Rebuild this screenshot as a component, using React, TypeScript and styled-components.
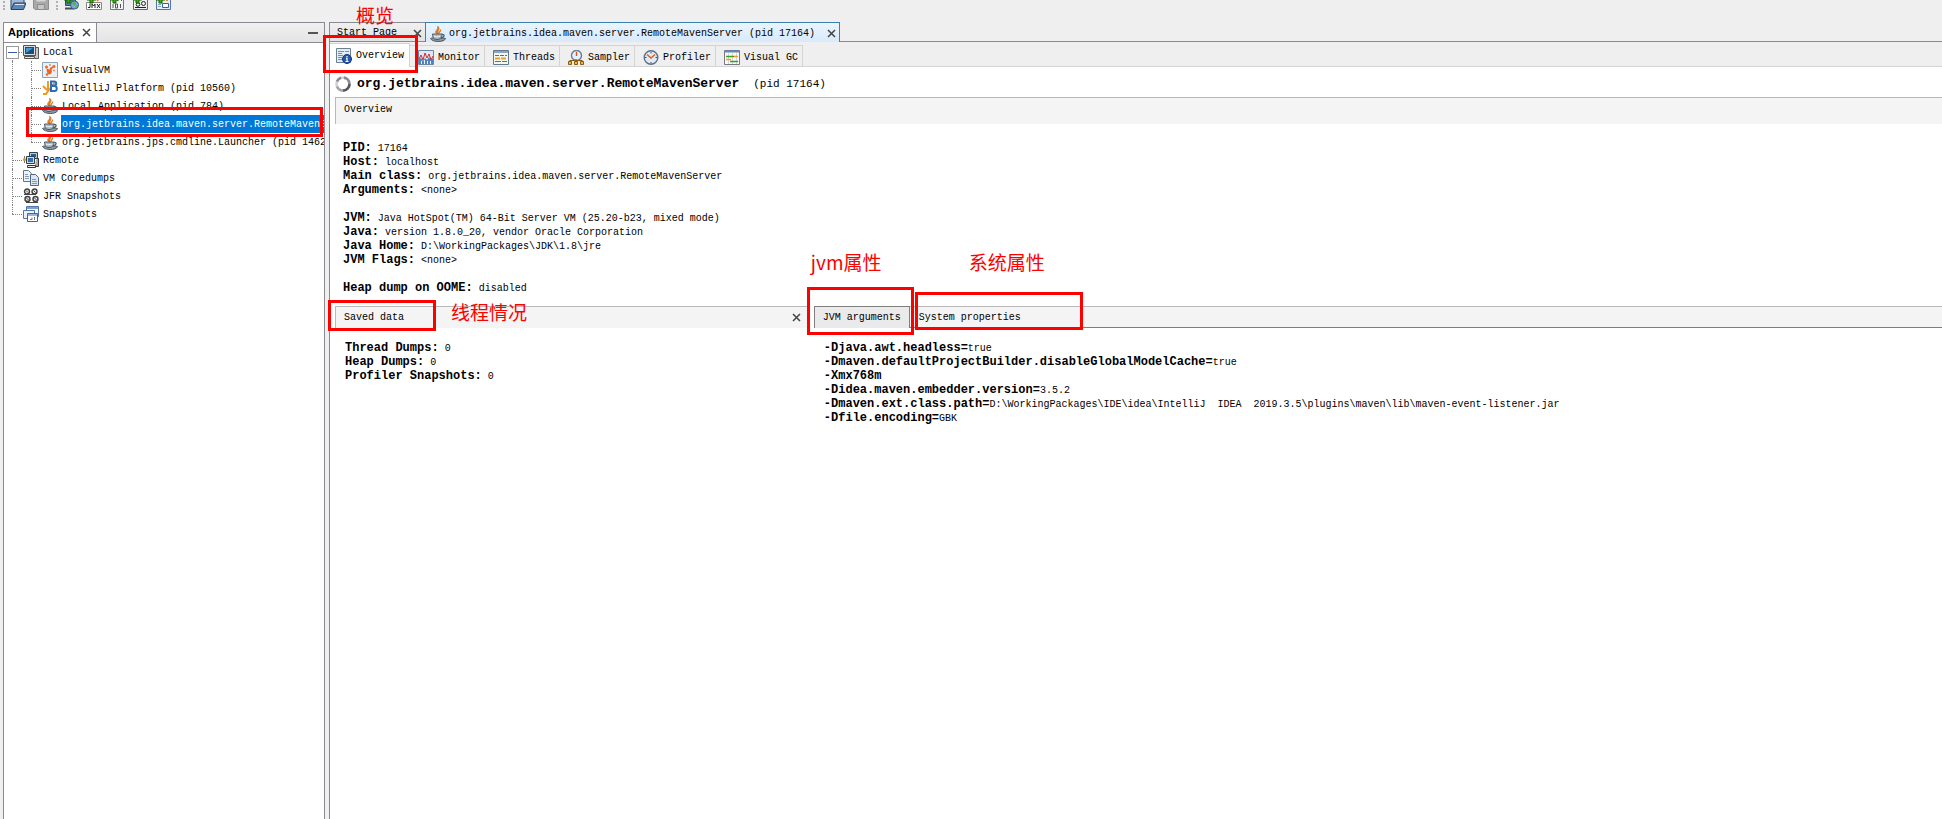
import React from "react";
import styled, { createGlobalStyle, css } from "styled-components";

const MONO = '"Liberation Mono", "Noto Sans CJK SC", monospace';

const GlobalStyle = createGlobalStyle`
  *, *::before, *::after { box-sizing: border-box; }
  body { margin: 0; background: #efefef; color: #000; font: 10px/14px ${MONO}; }
  button { margin: 0; padding: 0; border: 0; background: none; color: inherit; font: inherit; white-space: pre; cursor: default; }
  ul { margin: 0; padding: 0; list-style: none; }
  svg { display: block; flex: none; }
`;

/* ---------- icons ---------- */

const Icon = ({ children }: { children: React.ReactNode }) => (
  <svg width="16" height="16" viewBox="0 0 16 16" fill="none" aria-hidden="true">
    {children}
  </svg>
);

const Plus = () => <path d="M1 3h3V0h3v3h3v3H7v3H4V6H1z" fill="#3fae12" stroke="#176300" />;

const OpenIcon = () => (
  <Icon>
    <path d="M1 15V3h5l1 2h7v4" fill="#9db8d8" stroke="#33475f" />
    <path d="M1 15.500L4 9h12l-2.500 6.500z" fill="#5c86b8" stroke="#2c405a" />
    <path d="M5 10.500h9" stroke="#d7e5f5" />
  </Icon>
);
const SaveIcon = () => (
  <Icon>
    <path d="M.5 1.500h15v14H2l-1.500-1.500z" fill="#a9a9a9" stroke="#8d8d8d" />
    <path d="M3.500 1.500h9v6h-9z" fill="#d6d6d6" />
    <path d="M4.500 10.500h7v5h-7z" fill="#c6c6c6" stroke="#8d8d8d" />
  </Icon>
);
const HostIcon = () => (
  <Icon>
    <path d="M2.500 2.500h10v9h-10z" fill="#4d84b4" stroke="#3a4653" />
    <path d="M2 14.500h9" stroke="#4a4a4a" strokeWidth="2" />
    <circle cx="11.500" cy="11" r="4" fill="#79abdc" stroke="#35607f" />
    <path d="M9 9l3-1 1 2-2 2zM12 13l2-2 1 1-2 2z" fill="#5eaf3e" />
    <Plus />
  </Icon>
);
const JmxIcon = () => (
  <Icon>
    <path d="M12 1c2 2-2 3 0 6" stroke="#e88124" strokeWidth="2" />
    <path d="M.5 8.500h15v7H.5z" fill="#fff" stroke="#888" />
    <path d="M2 13.500h2v-4M6 14v-4l1.500 2L9 10v4M11 10l3 4M14 10l-3 4" stroke="#222" />
    <Plus />
  </Icon>
);
const CoreIcon = () => (
  <Icon>
    <path d="M1.500 1.500h13v14h-13z" fill="#f4f4f4" stroke="#777" />
    <path d="M8.500 3v4M12.500 3v4M4 10v4M6.500 10h2v4h-2zM11.500 10v4" stroke="#555" />
    <Plus />
  </Icon>
);
const JfrAddIcon = () => (
  <Icon>
    <path d="M1.500 4.500h14v11h-14z" fill="#f1f1f1" stroke="#666" />
    <circle cx="6" cy="10.500" r="1.800" stroke="#222" />
    <circle cx="11.500" cy="9.500" r="2" stroke="#222" />
    <path d="M3 13.500h11" stroke="#222" />
    <Plus />
  </Icon>
);
const SnapAddIcon = () => (
  <Icon>
    <path d="M1.500 1.500h14v14h-14z" fill="#e4edf9" stroke="#5376a6" />
    <path d="M7.500 9.500h6v4h-6z" fill="#fff" stroke="#3464a5" />
    <path d="M3 10.500h3M3 12.500h3" stroke="#8aa" />
    <path d="M11 4h2v3h-2z" fill="#e88124" />
    <Plus />
  </Icon>
);

const LocalIcon = () => (
  <Icon>
    <path d="M12.500 3.500h3v11h-4" fill="#c9c9c9" stroke="#5a5a5a" />
    <path d="M.5 1.500h12v10H.5z" fill="#d8dde2" stroke="#4a5560" />
    <path d="M2 3h9v7H2z" fill="#154f80" />
    <path d="M3 9V4h7z" fill="#4a98cc" />
    <path d="M1.500 12.500h10v2h-10z" fill="#e3e3e3" stroke="#555" />
  </Icon>
);
const VisualVmIcon = () => (
  <Icon>
    <path d="M.5 .5h15v15H.5z" fill="#e9f1f8" stroke="#8aa4bd" />
    <path d="M4.500 6.500c0 3 1 6 3 6s3-3 2-6l-2 1z" fill="#f2651d" />
    <path d="M8 7l3-2" stroke="#f2651d" strokeWidth="2" />
    <circle cx="4.500" cy="5" r="1.500" fill="#f2651d" />
    <circle cx="8" cy="3" r="1" fill="#f58a50" />
    <circle cx="12" cy="4.500" r="1.400" fill="#f2651d" />
    <circle cx="12" cy="8.500" r="1" fill="#f58a50" />
    <circle cx="5" cy="12.500" r="1.300" fill="#f2651d" />
  </Icon>
);
const IdeaIcon = () => (
  <Icon>
    <path d="M6 1v10l-2 3H1M1 6l4 4M4 14l9-12" stroke="#f09a1a" strokeWidth="2" />
    <path d="M9 1.500h3c3 0 3 4 0 4h-3zM9 6h3.500c3 0 3 5 0 5H9z" stroke="#2b6cc0" strokeWidth="2" />
  </Icon>
);
const JavaIcon = () => (
  <Icon>
    <path d="M7 8C3 5 9 4 7.500 0c4 3-1 4.500 1 8z" fill="#e8801c" stroke="#c8621a" strokeWidth=".6" />
    <path d="M9 7.500c0-2 2-2 1.500-4" stroke="#e27a1e" strokeWidth="1.400" />
    <path d="M.5 12.500c2-1 12-1 15 0-1 4-13 4-15 0z" fill="#8e9ba6" stroke="#4b5761" />
    <path d="M2.500 8h9.500c0 4-2 5.500-5 5.500S2.500 12 2.500 8z" fill="#aab6c0" stroke="#4f5c67" />
    <path d="M12 8.500c3-.5 3 2.500-1 3.500" stroke="#4f5c67" strokeWidth="1.300" />
    <path d="M4 10c1.500 1 4 1 6 0" stroke="#f4f7f9" />
  </Icon>
);
const RemoteIcon = () => (
  <Icon>
    <path d="M6.500 .5h8v6h-8z" fill="#bccad6" stroke="#333f4a" />
    <path d="M8 2h5v3H8z" fill="#245f96" />
    <path d="M13.500 6.500h2v8h-4" fill="#aaa" stroke="#333" />
    <path d="M3.500 4.500h8v7h-8z" fill="#cfd8df" stroke="#333f4a" />
    <path d="M5 6h5v4H5z" fill="#2d74ae" />
    <path d="M4.500 13.500h8v2h-8z" fill="#eee" stroke="#333" />
    <path d="M1.500 4v7" stroke="#777" />
    <circle cx="1.500" cy="7.500" r="1.500" fill="#d99024" />
  </Icon>
);
const DumpsIcon = () => (
  <Icon>
    <path d="M.5 .5h5l3 3v8h-8z" fill="#eef3f8" stroke="#60758a" />
    <path d="M7.500 4.500h5l3 3v8h-8z" fill="#dbe6f1" stroke="#4c6886" />
    <path d="M2 4.500h3M2 6.500h4M2 8.500h4M9 9.500h4M9 11.500h5M9 13.500h5" stroke="#8299b1" />
  </Icon>
);
const JfrIcon = () => (
  <Icon>
    <g stroke="#3f3f3f" strokeWidth="1.400" fill="#eee">
      <circle cx="4" cy="3.500" r="2.500" />
      <circle cx="11.500" cy="3.500" r="2.500" />
      <circle cx="4.500" cy="11" r="2.500" />
      <circle cx="12.500" cy="11" r="2.500" />
    </g>
    <path d="M1 6.500h12M3 14.500h12M3 2.500l2 2M10.500 2.500l2 2M3.500 10l2 2M11.500 10l2 2" stroke="#444" />
  </Icon>
);
const SnapshotsIcon = () => (
  <Icon>
    <path d="M3.500 .5h12v10h-12z" fill="#f5f9ff" stroke="#5275a8" />
    <path d="M4 2h11" stroke="#7fa0cf" strokeWidth="2" />
    <path d="M.5 4.500h11v8H.5z" fill="#eaf1fb" stroke="#5275a8" />
    <path d="M4.500 7.500h10v8h-10z" fill="#fff" stroke="#43669a" />
    <path d="M5 9h9" stroke="#9db5d8" strokeWidth="2" />
    <path d="M7 13.500h2v-2M11.500 14v-3" stroke="#777" />
  </Icon>
);

const OverviewIcon = () => (
  <Icon>
    <path d="M.5 .5h14v14H.5z" fill="#e3ebf4" stroke="#6b7f93" />
    <path d="M2 3.500h6M2 5.500h4M2 7.500h5M2 9.500h4M2 11.500h4" stroke="#7b8fa3" />
    <path d="M9 3.500h4" stroke="#7b8fa3" />
    <circle cx="11" cy="11" r="4.500" fill="#2457a7" stroke="#14377a" />
    <path d="M11 8v1.500M10 10.500h1V13M9.500 13.500h3" stroke="#fff" strokeWidth="1.200" />
  </Icon>
);
const MonitorIcon = () => (
  <Icon>
    <path d="M.5 .5h15v14H.5z" fill="#dce8f4" stroke="#6b86a3" />
    <path d="M1 14V9l2-1 2 3 2-3 2 2 2-3 2 3 2-2v6z" fill="#4d84c4" />
    <path d="M1 9l2-4 2 5 2-7 2 5 2-4 2 6 2-4" stroke="#d8282b" />
    <path d="M3.500 14v-3M6.500 14v-4M9.500 14v-3M12.500 14v-3" stroke="#e8f0f8" />
  </Icon>
);
const ThreadsIcon = () => (
  <Icon>
    <path d="M.5 .5h15v14H.5z" fill="#f3f7ee" stroke="#62788f" />
    <path d="M1 2h14" stroke="#8ba4bf" strokeWidth="2" />
    <path d="M2 5.500h12" stroke="#2f9235" strokeDasharray="4 1" />
    <path d="M2 8.500h12" stroke="#e6a52a" strokeWidth="2" strokeDasharray="5 1" />
    <path d="M2 11.500h12" stroke="#2f9235" strokeDasharray="6 1" />
  </Icon>
);
const SamplerIcon = () => (
  <Icon>
    <circle cx="8.500" cy="5.500" r="5" fill="#e8f1fa" stroke="#627e9b" strokeWidth="1.400" />
    <path d="M8.500 2v4" stroke="#d3541f" strokeWidth="1.400" />
    <path d="M1.500 10.500h13M8 9v3" stroke="#8a5a12" />
    <path d="M.5 11.500h3v3h-3zM6.500 11.500h3v3h-3zM12.500 11.500h3v3h-3z" fill="#f3b643" stroke="#8a5a12" />
  </Icon>
);
const ProfilerIcon = () => (
  <Icon>
    <circle cx="8" cy="7.500" r="6.800" fill="#dfeaf5" stroke="#5b7085" strokeWidth="1.400" />
    <path d="M8 2v1.500M8 12v1.500M2 7.500h1.500M12.500 7.500H14" stroke="#456" />
    <path d="M4 4.500L8 8l4-3.500" stroke="#e2601c" strokeWidth="1.600" />
  </Icon>
);
const GcIcon = () => (
  <Icon>
    <path d="M.5 .5h15v14H.5z" fill="#fbfbf6" stroke="#778" />
    <path d="M1 1.500h14" stroke="#6488b4" strokeWidth="2" />
    <path d="M4.500 3v11M8.500 3v11M12.500 3v11" stroke="#d6d6d6" />
    <path d="M2 6.500h8M6 11.500h8" stroke="#35a02e" strokeWidth="1.400" />
    <path d="M10 6.500h4M2 9.500h5" stroke="#ef9d25" strokeWidth="1.400" />
  </Icon>
);
const SpinnerIcon = () => (
  <Icon>
    <circle cx="8" cy="8" r="6.500" stroke="#d2d2d6" strokeWidth="2.600" />
    <path d="M6 1.800A6.500 6.500 0 0 0 2 5.500" stroke="#8a8a92" strokeWidth="2.600" />
    <path d="M2 10.500A6.500 6.500 0 0 0 8 14.500" stroke="#a4a4ab" strokeWidth="2.600" />
    <path d="M8 14.500A6.500 6.500 0 0 0 14.500 8" stroke="#55555e" strokeWidth="2.600" />
    <path d="M9 1.600A6.500 6.500 0 0 1 14.500 8" stroke="#8a8a92" strokeWidth="2.600" />
  </Icon>
);
const CrossIcon = () => (
  <svg width="9" height="9" viewBox="0 0 9 9" aria-hidden="true">
    <path d="M1 1l7 7M8 1L1 8" stroke="#444" strokeWidth="1.500" />
  </svg>
);

/* ---------- frame ---------- */

const Window = styled.div`
  display: flex;
  flex-direction: column;
  min-height: 100vh;
  overflow: hidden;
`;
const Toolbar = styled.div`
  display: flex;
  align-items: flex-end;
  gap: 7px;
  height: 22px;
  padding: 0 0 12px 3px;
`;
const Grip = styled.span`
  width: 2px;
  height: 16px;
  margin-right: -2px;
  border-left: 2px dotted #b0b0b0;
`;
const Panels = styled.div`
  display: grid;
  grid-template-columns: 322px minmax(0, 1fr);
  gap: 4px;
  flex: 1;
  padding-left: 3px;
`;

/* ---------- red marks over the window ---------- */

type Box = { $x: number; $y: number; $w?: number; $h?: number };
const Mark = styled.span<Box>`
  position: absolute;
  z-index: 10;
  left: ${(p) => p.$x}px;
  top: ${(p) => p.$y}px;
  width: ${(p) => p.$w}px;
  height: ${(p) => p.$h}px;
  border: 3px solid #fe0000;
  pointer-events: none;
`;
const Note = styled.span<Box>`
  position: absolute;
  z-index: 10;
  left: ${(p) => p.$x}px;
  top: ${(p) => p.$y}px;
  color: #fe0000;
  font: 19px/28px "Noto Sans CJK SC", sans-serif;
  white-space: nowrap;
  pointer-events: none;
`;

/* ---------- applications panel ---------- */

const Sidebar = styled.aside`
  min-width: 0;
  border: solid #8a8a92;
  border-width: 1px 1px 0;
  background: #fff;
`;
const SidebarHead = styled.header`
  display: flex;
  align-items: center;
  height: 20px;
  border-bottom: 1px solid #8a8a92;
  background: linear-gradient(#f0f0f0, #e4e4e4);
`;
const SidebarTab = styled.div`
  display: flex;
  align-items: center;
  gap: 8px;
  height: 19px;
  padding: 0 5px 0 4px;
  border-right: 1px solid #8a8a92;
  background: #fff;
  font: bold 11px/19px "Liberation Sans", Arial, sans-serif;
`;
const Minimize = styled.button`
  width: 10px;
  height: 2px;
  margin: 0 6px 0 auto;
  background: #555;
`;

const TreeRow = styled.li`
  position: relative;
  display: flex;
  align-items: center;
  height: 18px;
`;
type GuideKind = "line" | "tee" | "corner" | "box";
const Guide = styled.span<{ $kind: GuideKind }>`
  position: relative;
  flex: none;
  width: 19px;
  height: 18px;
  &::before {
    content: "";
    position: absolute;
    left: 8px;
    top: ${(p) => (p.$kind === "box" ? 9 : 0)}px;
    height: ${(p) => (p.$kind === "corner" || p.$kind === "box" ? 9 : 18)}px;
    border-left: 1px dotted #808080;
  }
  &::after {
    content: "";
    position: absolute;
    left: 8px;
    top: 9px;
    width: 10px;
    border-top: 1px dotted #808080;
    ${(p) => p.$kind === "line" && css`display: none;`}
  }
`;
const Expander = styled.button`
  position: absolute;
  z-index: 1;
  left: 2px;
  top: 3px;
  width: 13px;
  height: 13px;
  border: 1px solid #999;
  background: linear-gradient(#3d5aa8, #3d5aa8) center / 9px 1px no-repeat, #fff;
`;
const NodeLabel = styled.button<{ $selected?: boolean }>`
  flex: 1;
  min-width: 0;
  height: 18px;
  margin-left: 3px;
  padding: 2px 0 0 1px;
  overflow: hidden;
  text-align: left;
  background: ${(p) => (p.$selected ? "#0078d7" : "none")};
  color: ${(p) => (p.$selected ? "#fff" : "#000")};
`;

type Node = { label: string; icon: React.ReactNode; guides: GuideKind[]; selected?: boolean };
const NODES: Node[] = [
  { label: "Local", icon: <LocalIcon />, guides: ["box"] },
  { label: "VisualVM", icon: <VisualVmIcon />, guides: ["line", "tee"] },
  { label: "IntelliJ Platform (pid 10560)", icon: <IdeaIcon />, guides: ["line", "tee"] },
  { label: "Local Application (pid 784)", icon: <JavaIcon />, guides: ["line", "tee"] },
  { label: "org.jetbrains.idea.maven.server.RemoteMavenServer", icon: <JavaIcon />, guides: ["line", "tee"], selected: true },
  { label: "org.jetbrains.jps.cmdline.Launcher (pid 1462", icon: <JavaIcon />, guides: ["line", "corner"] },
  { label: "Remote", icon: <RemoteIcon />, guides: ["tee"] },
  { label: "VM Coredumps", icon: <DumpsIcon />, guides: ["tee"] },
  { label: "JFR Snapshots", icon: <JfrIcon />, guides: ["tee"] },
  { label: "Snapshots", icon: <SnapshotsIcon />, guides: ["corner"] },
];

/* ---------- editor area ---------- */

const Editor = styled.main`
  display: flex;
  flex-direction: column;
  min-width: 0;
  border-left: 1px solid #8a8a92;
  background: #fff;
`;
const EditorTabs = styled.div`
  display: flex;
  height: 20px;
  background: #efefef;
  box-shadow: inset 0 -1px #8a8a92;
`;
const EditorTab = styled.div<{ $active?: boolean }>`
  display: flex;
  align-items: center;
  padding: 2px 3px 0 7px;
  border: solid #8a8a92;
  border-width: 1px 0;
  background: linear-gradient(#f0f0f0, #e2e2e2);
  ${(p) =>
    p.$active &&
    css`
      padding-left: 4px;
      border-color: #3c7fb1;
      border-width: 1px 1px 0;
      background: linear-gradient(#eaf4fe, #d8eafc);
    `}
`;
const TabName = styled.button<{ $gap: number }>`
  display: flex;
  align-items: center;
  gap: 3px;
  height: 16px;
  margin-right: ${(p) => p.$gap}px;
`;

const ViewTabs = styled.div`
  display: flex;
  align-items: flex-end;
  height: 25px;
  background: #efefef;
  box-shadow: inset 0 -1px #d4d4d4;
`;
const ViewTab = styled.button<{ $active?: boolean }>`
  position: relative;
  display: flex;
  align-items: center;
  gap: 4px;
  height: 22px;
  padding: 3px 4px 0 8px;
  border: solid #d4d4d4;
  border-width: 1px 1px 1px 0;
  ${(p) =>
    p.$active &&
    css`
      height: 24px;
      padding: 1px 5px 0 6px;
      border-width: 1px 1px 0 0;
      background: #fff;
    `}
`;

const Heading = styled.h1`
  display: flex;
  align-items: center;
  height: 30px;
  margin: 0;
  padding: 4px 0 0 5px;
  font: 11px/20px ${MONO};
  white-space: pre;
  b { margin: 0 14px 0 6px; font-size: 13px; }
`;
const Sections = styled.div`
  padding-left: 5px;
`;
const Band = styled.div<{ $tall?: boolean }>`
  position: relative;
  display: flex;
  align-items: center;
  justify-content: space-between;
  height: ${(p) => (p.$tall ? 27 : 22)}px;
  padding: ${(p) => (p.$tall ? "0 8px 2px" : "0 8px")};
  border: solid #b9b9b9;
  border-width: 1px 0 0 1px;
  background: #f4f4f4;
`;
const Details = styled.div`
  padding: 17px 8px 11px;
`;
const Group = styled.div`
  & + & { margin-top: 14px; }
`;
const Line = styled.p`
  height: 14px;
  margin: 0;
  white-space: pre;
  b { font-size: 12px; }
`;
const Split = styled.div`
  display: grid;
  grid-template-columns: minmax(0, 21fr) minmax(0, 50fr);
  gap: 5px;
`;
const PaneBody = styled.div`
  padding: 13px 10px;
`;
const PaneTabs = styled.div`
  display: flex;
  height: 22px;
  background: #f4f4f4;
  box-shadow: inset 0 1px #b9b9b9, inset 0 -1px #7f7f7f;
`;
const PaneTab = styled.button<{ $active?: boolean }>`
  position: relative;
  padding: 0 8px;
  border: solid transparent;
  border-width: 1px 1px 0;
  ${(p) =>
    p.$active &&
    css`
      border-color: #7f7f7f;
      background: #eaeaea;
    `}
`;

type Pair = [string, string];
const OVERVIEW: Pair[][] = [
  [
    ["PID:", " 17164"],
    ["Host:", " localhost"],
    ["Main class:", " org.jetbrains.idea.maven.server.RemoteMavenServer"],
    ["Arguments:", " <none>"],
  ],
  [
    ["JVM:", " Java HotSpot(TM) 64-Bit Server VM (25.20-b23, mixed mode)"],
    ["Java:", " version 1.8.0_20, vendor Oracle Corporation"],
    ["Java Home:", " D:\\WorkingPackages\\JDK\\1.8\\jre"],
    ["JVM Flags:", " <none>"],
  ],
  [["Heap dump on OOME:", " disabled"]],
];
const SAVED: Pair[] = [
  ["Thread Dumps:", " 0"],
  ["Heap Dumps:", " 0"],
  ["Profiler Snapshots:", " 0"],
];
const JVM_ARGS: Pair[] = [
  ["-Djava.awt.headless=", "true"],
  ["-Dmaven.defaultProjectBuilder.disableGlobalModelCache=", "true"],
  ["-Xmx768m", ""],
  ["-Didea.maven.embedder.version=", "3.5.2"],
  ["-Dmaven.ext.class.path=", "D:\\WorkingPackages\\IDE\\idea\\IntelliJ  IDEA  2019.3.5\\plugins\\maven\\lib\\maven-event-listener.jar"],
  ["-Dfile.encoding=", "GBK"],
];

const Lines = ({ items }: { items: Pair[] }) => (
  <Group>
    {items.map(([name, value]) => (
      <Line key={name}>
        <b>{name}</b>
        {value}
      </Line>
    ))}
  </Group>
);

const TOOLS: [string, React.ReactNode][] = [
  ["Add remote host", <HostIcon />],
  ["Add JMX connection", <JmxIcon />],
  ["Add VM coredump", <CoreIcon />],
  ["Add JFR snapshot", <JfrAddIcon />],
  ["Add snapshot", <SnapAddIcon />],
];
const VIEWS: [string, React.ReactNode][] = [
  ["Monitor", <MonitorIcon />],
  ["Threads", <ThreadsIcon />],
  ["Sampler", <SamplerIcon />],
  ["Profiler", <ProfilerIcon />],
  ["Visual GC", <GcIcon />],
];

export default function App() {
  return (
    <Window>
      <GlobalStyle />
      <Toolbar>
        <Grip />
        <button aria-label="Open"><OpenIcon /></button>
        <button aria-label="Save"><SaveIcon /></button>
        <Grip />
        {TOOLS.map(([name, icon]) => (
          <button key={name} aria-label={name}>{icon}</button>
        ))}
      </Toolbar>
      <Panels>
        <Sidebar>
          <SidebarHead>
            <SidebarTab>
              Applications
              <button aria-label="Close Applications"><CrossIcon /></button>
            </SidebarTab>
            <Minimize aria-label="Minimize" />
          </SidebarHead>
          <ul>
            {NODES.map((node) => (
              <TreeRow key={node.label}>
                {node.guides.map((kind, i) => (
                  <Guide key={i} $kind={kind}>
                    {kind === "box" && <Expander aria-label="Collapse" />}
                  </Guide>
                ))}
                {node.icon}
                <NodeLabel $selected={node.selected}>{node.label}</NodeLabel>
                {node.selected && <Mark $x={22} $y={-8} $w={297} $h={30} />}
              </TreeRow>
            ))}
          </ul>
        </Sidebar>
        <Editor>
          <EditorTabs>
            <EditorTab>
              <TabName $gap={16}>Start Page</TabName>
              <button aria-label="Close Start Page"><CrossIcon /></button>
            </EditorTab>
            <EditorTab $active>
              <TabName $gap={12}>
                <JavaIcon />
                org.jetbrains.idea.maven.server.RemoteMavenServer (pid 17164)
              </TabName>
              <button aria-label="Close tab"><CrossIcon /></button>
            </EditorTab>
          </EditorTabs>
          <ViewTabs>
            <ViewTab $active>
              <OverviewIcon />
              Overview
              <Mark $x={-7} $y={-9} $w={95} $h={38} />
              <Note $x={26} $y={-43}>概览</Note>
            </ViewTab>
            {VIEWS.map(([name, icon]) => (
              <ViewTab key={name}>
                {icon}
                {name}
              </ViewTab>
            ))}
          </ViewTabs>
          <Heading>
            <SpinnerIcon />
            <b>org.jetbrains.idea.maven.server.RemoteMavenServer</b>
            (pid 17164)
          </Heading>
          <Sections>
            <Band $tall>Overview</Band>
            <Details>
              {OVERVIEW.map((items) => (
                <Lines key={items[0][0]} items={items} />
              ))}
            </Details>
            <Split>
              <section>
                <Band>
                  Saved data
                  <button aria-label="Close Saved data"><CrossIcon /></button>
                  <Mark $x={-8} $y={-7} $w={108} $h={31} />
                  <Note $x={115} $y={-9}>线程情况</Note>
                </Band>
                <PaneBody><Lines items={SAVED} /></PaneBody>
              </section>
              <section>
                <PaneTabs>
                  <PaneTab $active>
                    JVM arguments
                    <Mark $x={-8} $y={-20} $w={107} $h={48} />
                    <Note $x={-4} $y={-59}>jvm属性</Note>
                  </PaneTab>
                  <PaneTab>
                    System properties
                    <Mark $x={4} $y={-15} $w={168} $h={38} />
                    <Note $x={58} $y={-59}>系统属性</Note>
                  </PaneTab>
                </PaneTabs>
                <PaneBody><Lines items={JVM_ARGS} /></PaneBody>
              </section>
            </Split>
          </Sections>
        </Editor>
      </Panels>
    </Window>
  );
}
